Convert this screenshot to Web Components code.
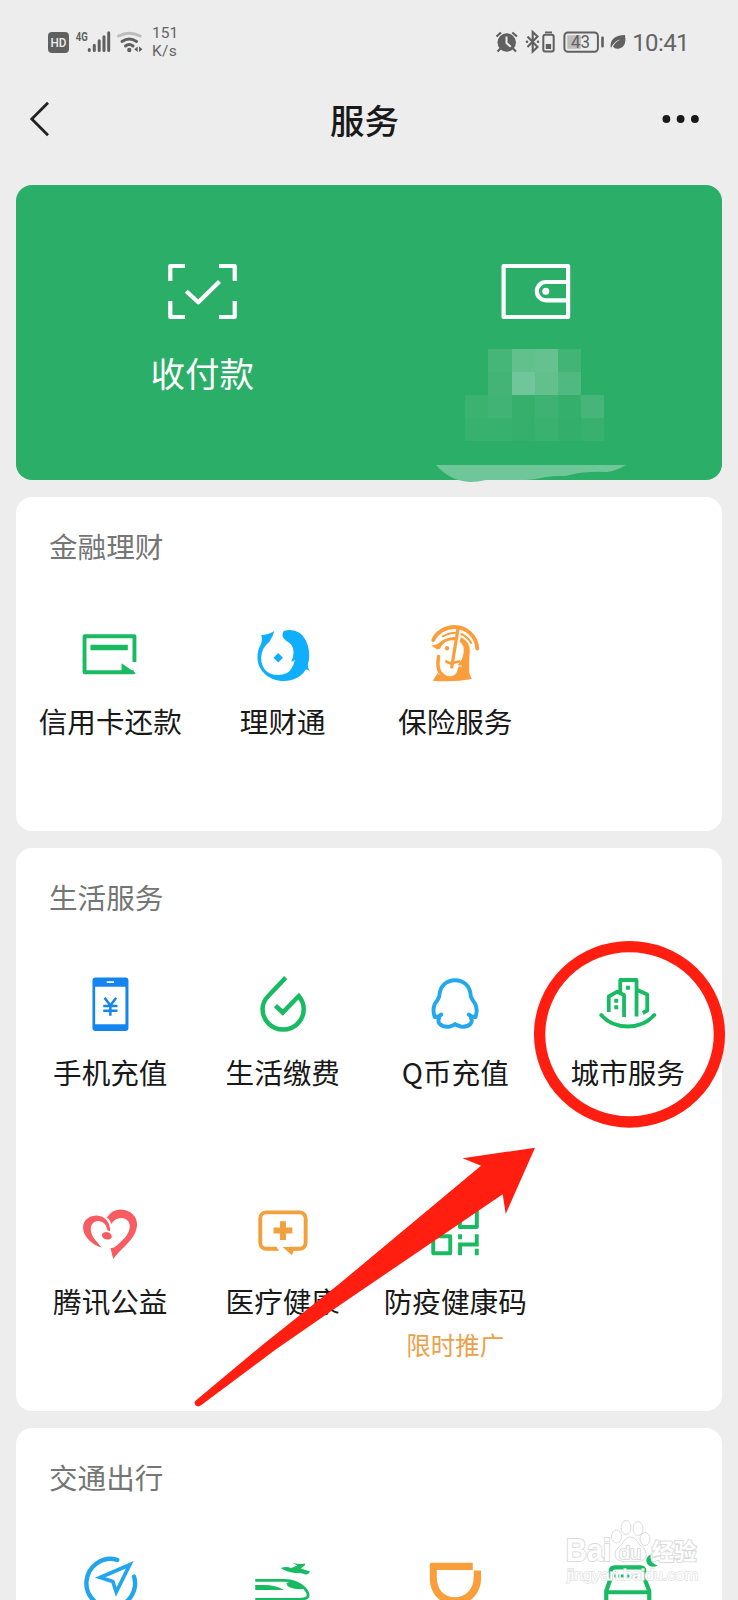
<!DOCTYPE html>
<html lang="zh-CN">
<head>
<meta charset="utf-8">
<title>服务</title>
<style>
html{background:#ededed}
body{margin:0;width:738px;height:1600px;overflow:hidden;background:#ededed;font-family:"Noto Sans CJK SC",sans-serif;color:#191919}
</style>
</head>
<body>
<service-page></service-page>
<script>
const ICONS = {
scan:{box:'168 264 69 55',art:`<g fill="none" stroke="#fff" stroke-width="4.200"><path stroke-linejoin="round" d="M170.300 281V266H185M219 266H234.700V281M170.300 301V317H185M219 317H234.700V301"/><path stroke-linejoin="round" d="M186.300 291.300L198.300 302.300L219.500 281.500"/></g>`},
wallet:{box:'501.500 264 69 55',art:`<g fill="none" stroke="#fff" stroke-width="4.200" stroke-linejoin="round"><rect x="504.100" y="266" width="64.500" height="51"/><path d="M568 282H546.500a9 9 0 0 0 0 18.300H568"/></g><circle cx="546.300" cy="291.200" r="3.500" fill="#fff"/>`},
card:{box:'80.250 623 60 60',art:`<path d="M134.700 661V635.200H84.800V671.200H134" fill="none" stroke="#18ba62" stroke-width="3.900" stroke-linejoin="round"/><path d="M90.700 643.700h37.400v5.500H90.700zM121.800 662.300l13.700 9.500v1.200h-13.700z" fill="#18ba62"/>`},
fish:{box:'252.750 623 60 60',art:`<path fill="#10aeff" d="M261 634Q268 634 274 630Q273 635 269 641Q261 647 260.900 657C261 668 268 674 277.500 674Q288 674 291.500 667Q293.800 663 294.800 658.500Q293 661 291 660.500Q293.500 656 293.300 651C293 644 289.500 642 285.500 639.500Q280 635 283.500 630Q292 627 299.500 632C306 637 309 646 309 655Q308.700 661 307.500 664Q307.800 668 310 670.500Q307.500 668.300 305.500 668.500C301 676 293 680 283.500 680C269 680 257.200 670 257.200 656Q257.200 649 260.700 643Q262.500 638 261 634ZM278 652L282.700 656.700L278 661.400L273.300 656.700Z"/>`},
guard:{box:'425.250 623 60 60',art:`<g fill="none" stroke="#fa9d3b" stroke-linecap="round"><path stroke-width="3.800" d="M433.500 639C437 631 446 626 455 626C467 626 477 636 477.500 647.500"/><path stroke-width="2" d="M443 635.500Q449 631.800 456 631.800M461.500 633Q468 636 471.500 642"/><path stroke-width="3.500" d="M438.800 655.500Q437 666 440 671Q445 678 452 677Q459 675.500 460 667"/><path stroke-width="3.200" d="M458.300 627.500L452 666"/><path stroke-width="2.800" d="M446.500 660.500Q449 662.500 452 662.200L459.500 660.500"/></g><path fill="#fa9d3b" d="M431.500 644.500Q438 644 441 640.500Q447 636 456 636L455 639.500Q446 638 441.500 645.500Q440.500 648.500 437.500 648.500ZM461 636Q470.500 641 470 650Q469 665 469.500 672L472 678Q454 681.500 433 679.800L438 672Q444 678.500 453 676Q460.500 674.500 462 664Q460 665 458 664Q463.500 659 464 650Q464.500 644 460 640.500Z"/><circle cx="447.300" cy="647.300" r="2.200" fill="#fa9d3b"/>`},
phone:{box:'80.250 975 60 60',art:`<path fill="#1485ee" fill-rule="evenodd" d="M95.700 977.500h30a3 3 0 0 1 3 3v47.500a3 3 0 0 1-3 3h-30a3 3 0 0 1-3-3v-47.500a3 3 0 0 1 3-3ZM95.400 986.700v37.500h30.300v-37.500ZM107 981.300v1.600h7.300v-1.600Z"/><path fill="none" stroke="#1485ee" stroke-width="2.500" d="M104.800 997.700L110.600 1005.500L116.400 997.700M110.600 1004.500V1015.700M103.500 1006H117.700M103.500 1010.800H117.700"/>`},
drop:{box:'252.750 975 60 60',art:`<path fill="none" stroke="#18ba62" stroke-width="4.500" stroke-linejoin="miter" d="M285.500 977.600L268.500 995.500C264 1000 262.300 1004 262.300 1009A20.600 20.600 0 0 0 303.500 1009Q303.500 1002 298.500 996L282.500 1012.500L275.200 1005.700"/>`},
qq:{box:'425.250 975 60 60',art:`<path fill="none" stroke="#23a8ee" stroke-width="3.900" stroke-linejoin="round" stroke-linecap="round" d="M441.500 1014.500Q438.500 1017.500 435 1017Q432.500 1010 435 1004Q438 1000.500 439.500 996.500C440 986 446.500 980.200 455.300 980.200S470.600 986 471.100 996.500Q472.600 1000.500 475.600 1004Q478.200 1010 475.700 1017Q472.100 1017.500 469.100 1014.500M439.500 1018Q437.500 1021 440 1024Q444 1027.500 450 1026.500Q454 1025.500 455.300 1024Q457 1025.500 461 1026.500Q467 1027.500 470.600 1024Q473.100 1021 471.100 1018"/>`},
city:{box:'597.750 975 60 60',art:`<g fill="none" stroke="#18ba62" stroke-width="3.800" stroke-linejoin="round"><path stroke-linecap="round" d="M601 1015Q611 1026.500 627.500 1026.500T654 1015"/><path d="M608.500 1012V996.500L617 991.700L623.800 995V1017M620 992.500V980H636.300V1016.500M636 989.500L647 994.500V1010.500L642.500 1013"/></g><path fill="#18ba62" d="M625.700 985.700h4v4h-4zM614 998.700h4v4h-4zM614 1005.300h4v4h-4z"/>`},
heart:{box:'80.250 1203.500 60 60',art:`<path fill="#f65c60" d="M101.800 1248C92 1245 83.300 1237 83.300 1228C83.500 1220 90 1216 97 1216C105 1216.500 110.500 1222 110.500 1232L107.500 1230.500C106.500 1225 103.500 1221.500 98.500 1221.500C94 1221.500 91 1225 91 1230C91.500 1238 97 1241.500 101.800 1248ZM107 1218.300Q112 1210 121.500 1210C131 1210.500 137.300 1217 137.300 1225C137 1239 123 1247 113.500 1259.500Q112 1254 110.800 1248.500Q114 1249 117 1246C125 1239 130 1234 130 1226.500C130 1221.500 126 1218.500 121.500 1218.500C117 1218.500 114 1220.500 111.500 1224.500Q110.500 1220 107 1218.300Z"/><ellipse cx="107.200" cy="1236.300" rx="5" ry="3.600" transform="rotate(15 107 1236)" fill="#f65c60"/>`},
medical:{box:'252.750 1203.500 60 60',art:`<path d="M276.500 1249.300H266a6 6 0 0 1-6-6V1218.900a6 6 0 0 1 6-6h33.400a6 6 0 0 1 6 6V1243.300a6 6 0 0 1-6 6H289" fill="none" stroke="#f2a03d" stroke-width="3.900"/><path fill="#f2a03d" d="M282.300 1247.400h15.500v3.700l-4.300 0l-1.800 4.600ZM279.800 1221.700h5.900v6.400h6.400v5.900h-6.400v6.600h-5.900v-6.600h-6.500v-5.900h6.500zM275 1247.400h1l3 3.850h-4z"/>`},
code:{box:'425.250 1203.500 60 60',art:`<g fill="none" stroke="#18ba62" stroke-width="3.900"><path stroke-linejoin="round" d="M433.500 1210.500h17v17h-17zM460.100 1210.500h17v17h-17zM433.500 1236.800h17v17h-17z"/><path d="M477 1234.800V1245H460.300V1255.800M460.300 1234.800v5M477 1249.300v6.500"/></g>`},
nav:{box:'80.250 1555 60 60',art:`<g fill="none" stroke="#20a5ee" stroke-width="4.400"><path stroke-linecap="round" d="M117.500 1559.800A24.300 24.300 0 1 0 134.300 1576.500"/><path stroke-width="3.700" d="M100.500 1577.500L130 1564.700L116.500 1592L113 1581.500Z"/></g>`},
train:{box:'252.750 1555 60 60',art:`<path fill="none" stroke="#18ba62" stroke-width="2.800" d="M255 1580.300H284Q296 1580.300 304 1588Q309 1593 307.500 1597Q305 1599.300 299 1599.300H255"/><path fill="#18ba62" d="M255 1585h8q13 0 20.500 5H255zM286 1583q8-3 13 1q6 4 5 5q-17 1-18-6ZM280.500 1568Q286 1566 291 1568L297 1565.500L292 1562.500Q299 1565 304.500 1563.500L305 1565L300.500 1568.500L310 1571.500Q307 1576 304 1574Q300 1572.500 295 1573Q286 1572 280.500 1568Z"/>`},
cup:{box:'425.250 1555 60 60',art:`<path fill="#fa9d3b" d="M432 1562.700H473V1570H437V1577C437 1589 444 1597.300 455 1597.300S474 1589 474 1577V1570.500H481.300V1578C481.300 1594 470 1605 455.500 1605S430 1594 430 1578V1564.700Q430 1562.700 432 1562.700Z"/>`},
taxi:{box:'597.750 1555 60 60',art:`<path fill="none" stroke="#18ba62" stroke-width="4.200" stroke-linejoin="round" d="M606 1600V1591L610.500 1578V1571Q610.700 1567.500 614.500 1567.300H640Q644 1567.500 644 1571V1578L649 1591V1600"/><path fill="none" stroke="#18ba62" stroke-width="4" d="M606 1592.200H649"/><path fill="none" stroke="#18ba62" stroke-width="3" stroke-dasharray="5 1.500" d="M614 1576H637"/><path fill="#18ba62" d="M650.500 1554.500Q648.500 1562 657.500 1565.500Q650 1569 646.500 1563Q644.500 1557 650.500 1554.500Z"/>`}
};

class MiniElement extends HTMLElement {
  connectedCallback(){ this.attachShadow({mode:'open'}).innerHTML = this.view(); }
}

customElements.define('app-icon', class extends MiniElement {
  view(){
    const i = ICONS[this.getAttribute('name')], [, , w, h] = i.box.split(' ');
    return `<style>:host{display:block}svg{display:block;overflow:visible}</style><svg width="${w}" height="${h}" viewBox="${i.box}">${i.art}</svg>`;
  }
});

customElements.define('status-bar', class extends MiniElement {
  view(){ return `<style>
:host{display:flex;justify-content:space-between;height:80px;padding:0 49px 0 48px;box-sizing:border-box;color:#646464;font-family:Roboto,sans-serif}
.g{display:flex}svg{display:block}
.rate{font-size:15.500px;line-height:18.300px;padding:24px 0 0 8px;height:40px}
.rate span{display:block}.rate span:last-child{letter-spacing:.3px}
.time{font-size:24px;line-height:28px;padding-top:29px;letter-spacing:-.6px;margin-left:5px}
</style>
<div class="g"><svg width="96" height="80" viewBox="48 0 96 80"><rect x="48" y="32" width="21" height="21" rx="4" fill="#606060"/><text x="50.500" y="47.200" font-size="13" font-weight="500" fill="#ededed" textLength="16" lengthAdjust="spacingAndGlyphs">HD</text><text x="75.800" y="41" font-size="12.300" font-weight="700" fill="#606060" textLength="12" lengthAdjust="spacingAndGlyphs">4G</text>
<g stroke="#606060" stroke-width="3" stroke-linecap="round" fill="none"><path d="M89.300 49.500v1M94.300 45.300v5.200M99.200 40.800v9.700M104 36.800v13.700M108.700 32.800v17.700"/><path stroke="#bdbdbd" d="M118.500 36Q129.300 30.500 140.200 36"/><path d="M122 41.500Q129.300 36.500 136.600 41.500M125.500 46Q129.300 43 133 46"/></g><circle cx="129.300" cy="50" r="2.200" fill="#606060"/><path fill="#606060" d="M137.700 46.600v5.400l-3.500-2.700zM139 46.600v5.400l3.500-2.700z"/></svg>
<div class="rate"><span>151</span><span>K/s</span></div></div>
<div class="g"><svg width="131" height="80" viewBox="497 0 131 80"><circle cx="507.700" cy="42.500" r="9.200" fill="#606060"/><path stroke="#606060" stroke-width="2.200" fill="none" d="M497.500 36.500L502 32.500M513.300 32.500L518 36.500M501.500 48.500L498.500 51.500M514 48.500L517 51.500"/><path d="M507.500 36.500v6.500l4.300 3.800" fill="none" stroke="#ededed" stroke-width="2"/>
<path fill="none" stroke="#606060" stroke-width="2.100" d="M528.500 36.500L538.500 47L533.700 51.500V32L538.500 36.500L528.500 47"/><circle cx="528" cy="41.800" r="1.300" fill="#606060"/><circle cx="539" cy="41.800" r="1.300" fill="#606060"/><rect x="544.300" y="34.700" width="10.400" height="16.700" rx="2" fill="none" stroke="#606060" stroke-width="2"/><path d="M546 31.500h7v1.700h-7zM546.800 44h5.300v5h-5.300z" fill="#606060"/>
<rect x="565.400" y="32.400" width="33.500" height="19.300" rx="3.500" fill="none" stroke="#606060" stroke-width="2"/><path fill="#bcbcbc" d="M568.300 35.300h13.500v13.500h-13.500z"/><rect x="602.200" y="36.500" width="2.600" height="11" rx="1" fill="#606060"/><text x="572" y="48.200" font-size="17.500" fill="#606060" textLength="19" lengthAdjust="spacingAndGlyphs">43</text><path fill="#606060" d="M626 35Q628 46 621 48.300Q616 50 614 46.500Q616 42 621.500 39.500Q615 41 612 48Q610.500 43 614 39Q618 35 626 35Z"/></svg>
<div class="time">10:41</div></div>`; }
});

customElements.define('nav-bar', class extends MiniElement {
  view(){ return `<style>
:host{display:grid;grid-template-columns:60px 1fr 60px;align-items:center;height:78px;padding:0 38px 0 29px;box-sizing:border-box}
svg{display:block}h1{margin:0 0 1px;font-size:34.500px;line-height:50px;font-weight:500;text-align:center}
</style><svg width="22" height="40" viewBox="29 99 22 40"><path d="M48 102.800L31.800 119L48 135.200" fill="none" stroke="#222" stroke-width="2.800"/></svg><h1><slot></slot></h1><svg width="60" height="20" viewBox="640 109 60 20" fill="#191919"><circle cx="666.400" cy="119" r="3.900"/><circle cx="680.600" cy="119" r="3.900"/><circle cx="694.900" cy="119" r="3.900"/></svg>`; }
});

customElements.define('pay-card', class extends MiniElement {
  view(){
    const rows=[['','#45b578','#61c08c','#65c290','#42b475',''],['','#43b476','#70c69a','#62c08d','#50b982',''],['#3cb271','#41b475','#36af6c','#3db272','#35af6c','#46b579'],['#38b06e','#38b06e','#36af6c','#3bb170','#34af6b','#38b06e']];
    return `<style>
:host{display:grid;grid-template-columns:1fr 1fr;height:295.500px;margin-top:.5px;padding:79.500px 19.500px 0;box-sizing:border-box;border-radius:16px;background:#2bae67;position:relative}
.c{display:flex;flex-direction:column;align-items:center}
.l{color:#fff;font-size:34.500px;line-height:50px;margin-top:27.500px}
.m{display:grid;grid-template-columns:repeat(6,23.200px);grid-auto-rows:23.200px;margin-top:29.700px;margin-right:2px}
.brush{position:absolute;left:416px;top:280.500px}
</style><div class="c"><app-icon name="scan"></app-icon><div class="l"><slot></slot></div></div>
<div class="c"><app-icon name="wallet"></app-icon><div class="m">${rows.flat().map(c=>`<i style="background:${c||'transparent'}"></i>`).join('')}</div></div>
<svg class="brush" width="200" height="18" viewBox="432 465 200 18"><path fill="#6fc699" d="M436 465H626Q616 471 607 472Q592 471.500 583 472.500Q572 474 566 476Q554 475.500 546 477Q533 480 525 480H486Q478 482 470 482Q450 481 436 465Z"/></svg>`; }
});

customElements.define('service-item', class extends MiniElement {
  view(){ return `<style>
:host{display:flex;flex-direction:column;align-items:center;height:228.500px;white-space:nowrap}
.l{font-size:28.600px;line-height:40px;margin-top:17.500px}
.s{font-size:24.500px;line-height:34px;color:#eda04a;margin-top:7px}
</style><app-icon name="${this.getAttribute('icon')}"></app-icon><div class="l"><slot></slot></div><div class="s"><slot name="note"></slot></div>`; }
});

customElements.define('service-section', class extends MiniElement {
  view(){ return `<style>
:host{display:block;margin-top:17px;background:#fff;border-radius:16px;padding:29px 8px 0;box-sizing:border-box;overflow:hidden}
h2{margin:0 0 57.500px 25px;font-size:28.600px;line-height:40px;font-weight:400;color:#757575}
.grid{display:grid;grid-template-columns:repeat(4,172.500px)}
</style><h2>${this.getAttribute('heading')}</h2><div class="grid"><slot></slot></div>`; }
});

customElements.define('screen-marks', class extends MiniElement {
  view(){ return `<style>:host{position:absolute;inset:0;pointer-events:none}svg{display:block}</style>
<svg width="738" height="1600" viewBox="0 0 738 1600"><ellipse cx="629.500" cy="1034.300" rx="89.900" ry="87.700" fill="none" stroke="#ff1e10" stroke-width="11.300"/>
<path fill="#ff1e10" d="M535 1147.700L462.700 1158.300L481 1165.700L340 1283.300L263 1344.500L195.800 1400.500Q193.500 1403 195.500 1405.300Q198 1407.500 201 1405.300L275 1350L340 1305L502.700 1194.300L505.700 1214Z"/>
<g fill="#fff" fill-opacity=".75" stroke="#dcdcdc" stroke-width="1"><ellipse cx="616.500" cy="1536.500" rx="5" ry="6.500"/><ellipse cx="626" cy="1527.500" rx="5" ry="7"/><ellipse cx="638" cy="1528.500" rx="5" ry="7"/><ellipse cx="645" cy="1539" rx="5" ry="6.500"/><path d="M630.500 1537Q635 1537 639 1544Q648 1551 646 1557Q643 1563 631 1561.500Q618 1563 615.500 1557Q613 1551 622 1544Q626 1537 630.500 1537Z"/>
<g paint-order="stroke" stroke-width="2" fill-opacity="1" font-family="Liberation Sans,sans-serif" font-weight="700"><text x="566" y="1561" font-size="31" textLength="45" lengthAdjust="spacingAndGlyphs">Bai</text><text x="619" y="1559" font-size="18" font-weight="400" textLength="22" lengthAdjust="spacingAndGlyphs">du</text><text x="651.500" y="1559.500" font-size="22.500" font-family="Noto Sans CJK SC,sans-serif">经验</text><text x="567" y="1579.500" font-size="15.500" font-weight="400" stroke="#e2e2e2" stroke-width="1.400" textLength="131" lengthAdjust="spacingAndGlyphs">jingyan.baidu.com</text></g></g></svg>`; }
});

customElements.define('service-page', class extends MiniElement {
  view(){ return `<style>:host{display:block;position:relative;width:738px;height:1600px;overflow:hidden}main{padding:26px 16px 0;display:flow-root}
#a{height:334px}#b{height:563px}#c{height:320px}</style>
<status-bar></status-bar><nav-bar>服务</nav-bar><main><pay-card>收付款</pay-card>
<service-section id="a" heading="金融理财"><service-item icon="card">信用卡还款</service-item><service-item icon="fish">理财通</service-item><service-item icon="guard">保险服务</service-item></service-section>
<service-section id="b" heading="生活服务"><service-item icon="phone">手机充值</service-item><service-item icon="drop">生活缴费</service-item><service-item icon="qq">Q币充值</service-item><service-item icon="city">城市服务</service-item><service-item icon="heart">腾讯公益</service-item><service-item icon="medical">医疗健康</service-item><service-item icon="code">防疫健康码<span slot="note">限时推广</span></service-item></service-section>
<service-section id="c" heading="交通出行"><service-item icon="nav"></service-item><service-item icon="train"></service-item><service-item icon="cup"></service-item><service-item icon="taxi"></service-item></service-section></main><screen-marks></screen-marks>`; }
});
</script>
</body>
</html>
